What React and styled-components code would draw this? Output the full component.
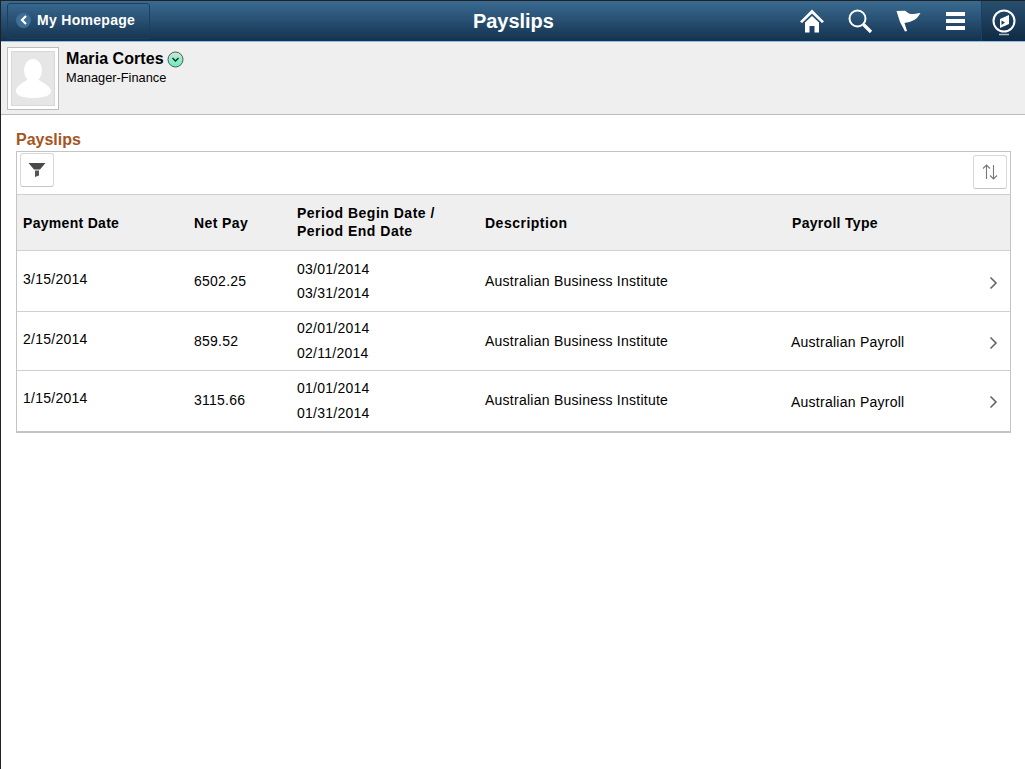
import styled, { createGlobalStyle } from 'styled-components';

const GlobalStyle = createGlobalStyle`
  html, body {
    margin: 0;
    padding: 0;
    background: #fff;
  }
  body {
    font-family: "Liberation Sans", Arial, sans-serif;
    font-size: 14px;
    color: #000;
  }
`;

const Page = styled.div`
  box-sizing: border-box;
  height: 769px;
  border-left: 1px solid #222;
  border-top: 1px solid #222;
  overflow: hidden;
`;

const Banner = styled.header`
  height: 40px;
  border-bottom: 1px solid #8fbce6;
  background: linear-gradient(#3a6b92, #14324f);
  display: flex;
  align-items: center;
  position: relative;
`;

const BackButton = styled.a`
  box-sizing: border-box;
  margin-left: 6px;
  width: 143px;
  height: 36px;
  border: 1px solid #1d3f5e;
  border-radius: 3px;
  display: flex;
  align-items: center;
  gap: 6px;
  padding: 0 0 2px 8px;
  color: #fff;
  font-size: 14px;
  font-weight: bold;
  letter-spacing: 0.3px;
`;

const BackDot = styled.span`
  width: 15px;
  height: 15px;
  border-radius: 50%;
  background: #3f6f97;
  display: flex;
  align-items: center;
  justify-content: center;
`;

const BannerTitle = styled.h1`
  position: absolute;
  left: 472px;
  top: 9px;
  margin: 0;
  color: #fff;
  font-size: 20px;
  line-height: 23px;
  font-weight: bold;
  letter-spacing: -0.05px;
`;

const BannerIcons = styled.nav`
  margin-left: auto;
  display: flex;
  align-items: center;
  height: 100%;
`;

const IconSlot = styled.span`
  width: ${(p) => p.$w}px;
  display: flex;
  justify-content: center;
`;

const CompassSlot = styled.span`
  box-sizing: border-box;
  width: 44px;
  height: 100%;
  margin-left: 2px;
  padding-top: 3px;
  background: rgba(10, 30, 50, 0.35);
  border-left: 1px solid #1d3f5e;
  display: flex;
  align-items: center;
  justify-content: center;
`;

const ProfileBand = styled.section`
  height: 67px;
  background: #efefef;
  border-bottom: 1px solid #bbb;
  display: flex;
  padding: 5px 0 0 6px;
`;

const Photo = styled.div`
  box-sizing: border-box;
  width: 52px;
  height: 63px;
  border: 1px solid #bdbdbd;
  background: #fff;
  padding: 3px;
`;

const PhotoInner = styled.div`
  height: 100%;
  background: #e6e6e6;
  border: 1px solid #d8d8d8;
  box-sizing: border-box;
`;

const ProfileText = styled.div`
  margin-left: 7px;
`;

const NameRow = styled.div`
  display: flex;
  align-items: center;
  gap: 3px;
  font-size: 16px;
  line-height: 20px;
  font-weight: bold;
  letter-spacing: 0.06px;
  margin-top: 2px;
`;

const JobTitle = styled.div`
  font-size: 12.8px;
  line-height: 14px;
  margin-top: 2px;
`;

const Content = styled.main`
  padding: 16px 14px 0 15px;
`;

const SectionTitle = styled.h2`
  margin: 0 0 2px;
  color: #a5551d;
  font-size: 16px;
  line-height: 18px;
  font-weight: bold;
`;

const GridBox = styled.div`
  border: 1px solid #c4c4c4;
  border-bottom-width: 2px;
`;

const Toolbar = styled.div`
  height: 41px;
  border-bottom: 1px solid #d0d0d0;
  display: flex;
  justify-content: space-between;
  align-items: flex-start;
  padding: 1px 3px 0;
`;

const ToolButton = styled.button`
  box-sizing: border-box;
  width: 34px;
  height: 34px;
  margin-top: ${(p) => p.$drop || 0}px;
  padding: 0 1px 0 0;
  background: #fff;
  border: 1px solid #d8d8d8;
  border-bottom-color: #c4c4c4;
  border-radius: 3px;
  display: flex;
  align-items: center;
  justify-content: center;
`;

const Columns = styled.div`
  display: grid;
  grid-template-columns: 171px 103px 188px 306px 1fr 30px;
`;

const HeaderRow = styled(Columns)`
  height: 55px;
  background: #efefef;
  border-bottom: 1px solid #d0d0d0;
  align-items: center;
  font-weight: bold;
  font-size: 14px;
  line-height: 18px;
`;

const HeaderCell = styled.div`
  padding-left: ${(p) => p.$left || 6}px;
  margin-top: ${(p) => p.$lift || 0}px;
  letter-spacing: ${(p) => p.$track}px;
`;

const Row = styled(Columns)`
  height: ${(p) => p.$h}px;
  border-bottom: 1px solid #d0d0d0;
  letter-spacing: 0.25px;
  &:last-child {
    border-bottom: 0;
  }
`;

const Cell = styled.div`
  padding-left: 6px;
  padding-top: ${(p) => p.$top}px;
  line-height: 16px;
`;

const Dates = styled(Cell)`
  line-height: 24.5px;
`;

const Chevron = styled.div`
  padding-top: ${(p) => p.$top}px;
  padding-left: 9px;
`;

const rows = [
  { h: 60, paid: '3/15/2014', net: '6502.25', begin: '03/01/2014', end: '03/31/2014', type: '', off: [20, 22, 5.75, 22, 24, 25] },
  { h: 58, paid: '2/15/2014', net: '859.52', begin: '02/01/2014', end: '02/11/2014', type: 'Australian Payroll', off: [19, 21, 4, 21, 22, 24] },
  { h: 60, paid: '1/15/2014', net: '3115.66', begin: '01/01/2014', end: '01/31/2014', type: 'Australian Payroll', off: [19, 21, 5, 21, 23, 24] },
];

function HomeIcon() {
  return (
    <svg width="24" height="24" viewBox="0 0 24 24" fill="#fff">
      <path d="M12 0.5 L24 12.5 L22 14 L12 4.5 L2 14 L0 12.5 Z" />
      <path d="M5 13.5 L12 7 L19 13.5 V23.5 H14.5 V17 H9.5 V23.5 H5 Z" />
    </svg>
  );
}

function SearchIcon() {
  return (
    <svg width="26" height="26" viewBox="0 0 26 26" fill="none" stroke="#fff">
      <circle cx="10.5" cy="10.5" r="8" strokeWidth="2" />
      <path d="M16.5 16.5 L24 24" strokeWidth="3.2" />
    </svg>
  );
}

function FlagIcon() {
  return (
    <svg width="26" height="26" viewBox="0 0 26 26" fill="#fff">
      <path d="M0.5 3 L9 2.7 C11 4 13 6 15.5 6 C18 6 21 5.5 24.5 5 C22 9 20 11.5 17 12.5 C14 14 11 14.5 8.5 15 L11 23 L9 23.5 L4 14 Z" />
    </svg>
  );
}

function MenuIcon() {
  return (
    <svg width="19" height="18" viewBox="0 0 19 18" fill="#fff">
      <rect x="0" y="0" width="19" height="4" />
      <rect x="0" y="7" width="19" height="4" />
      <rect x="0" y="14" width="19" height="4" />
    </svg>
  );
}

function CompassIcon() {
  return (
    <svg width="26" height="28" viewBox="0 0 26 28" fill="none">
      <circle cx="13" cy="12" r="10.5" stroke="#fff" strokeWidth="2" />
      <path d="M18 6 V15 L9 19 V10 Z" fill="#fff" />
      <path d="M10.5 11.5 L14 13.5 L10.5 16 Z" fill="#1d3f5e" />
      <path d="M8 25.5 H18" stroke="#a9bccb" strokeWidth="1.5" />
    </svg>
  );
}

function ChevronIcon() {
  return (
    <svg width="9" height="14" viewBox="0 0 9 14" fill="none" stroke="#666" strokeWidth="1.6">
      <path d="M1.5 1.5 L7 7 L1.5 12.5" />
    </svg>
  );
}

export default function App() {
  return (
    <>
      <GlobalStyle />
      <Page>
        <Banner>
          <BackButton>
            <BackDot>
              <svg width="8" height="10" viewBox="0 0 8 10" fill="none" stroke="#fff" strokeWidth="2.2">
                <path d="M6 1 L2 5 L6 9" />
              </svg>
            </BackDot>
            My Homepage
          </BackButton>
          <BannerTitle>Payslips</BannerTitle>
          <BannerIcons>
            <IconSlot $w={47}><HomeIcon /></IconSlot>
            <IconSlot $w={50}><SearchIcon /></IconSlot>
            <IconSlot $w={47}><FlagIcon /></IconSlot>
            <IconSlot $w={47}><MenuIcon /></IconSlot>
            <CompassSlot><CompassIcon /></CompassSlot>
          </BannerIcons>
        </Banner>
        <ProfileBand>
          <Photo>
            <PhotoInner>
              <svg width="42" height="53" viewBox="0 0 42 53" fill="#fff">
                <ellipse cx="21" cy="18.5" rx="9" ry="11.5" />
                <path d="M15 28 C8 32 4 35 4 39 C4 44 12 46 21 46 C30 46 39 44 39 39 C39 35 33 32 27 28 Z" />
              </svg>
            </PhotoInner>
          </Photo>
          <ProfileText>
            <NameRow>
              Maria Cortes
              <svg width="17" height="17" viewBox="0 0 17 17">
                <defs>
                  <linearGradient id="dropFill" x1="0" y1="0" x2="0" y2="1">
                    <stop offset="0" stopColor="#c9e8da" />
                    <stop offset="1" stopColor="#5ff0bc" />
                  </linearGradient>
                </defs>
                <circle cx="8.5" cy="8.5" r="7.5" fill="url(#dropFill)" stroke="#555" />
                <path d="M5.5 7 L8.5 10 L11.5 7" fill="none" stroke="#222" strokeWidth="1.4" />
              </svg>
            </NameRow>
            <JobTitle>Manager-Finance</JobTitle>
          </ProfileText>
        </ProfileBand>
        <Content>
          <SectionTitle>Payslips</SectionTitle>
          <GridBox>
            <Toolbar>
              <ToolButton aria-label="Filter">
                <svg width="18" height="16" viewBox="0 0 18 16" fill="#4a4a4a">
                  <path d="M0.5 1 H17.5 L12 7.5 H6 Z" />
                  <path d="M7 8.5 H11 V13.5 L7 15 Z" fill="#555" />
                </svg>
              </ToolButton>
              <ToolButton aria-label="Sort" $drop={2}>
                <svg width="18" height="18" viewBox="0 0 18 18" fill="none" stroke="#777" strokeWidth="1.1">
                  <path d="M5.5 16 V2 M2 5.5 L5.5 2 L9 5.5" />
                  <path d="M12.5 2 V16 M9 12.5 L12.5 16 L16 12.5" />
                </svg>
              </ToolButton>
            </Toolbar>
            <HeaderRow>
              <HeaderCell $track={0.3}>Payment Date</HeaderCell>
              <HeaderCell $track={0.4}>Net Pay</HeaderCell>
              <HeaderCell $track={0.5} $lift={-1}>Period Begin Date /<br />Period End Date</HeaderCell>
              <HeaderCell $track={0.5}>Description</HeaderCell>
              <HeaderCell $track={0.3} $left={7}>Payroll Type</HeaderCell>
              <div />
            </HeaderRow>
            {rows.map((r) => (
              <Row key={r.paid} $h={r.h}>
                <Cell $top={r.off[0]}>{r.paid}</Cell>
                <Cell $top={r.off[1]}>{r.net}</Cell>
                <Dates $top={r.off[2]}>{r.begin}<br />{r.end}</Dates>
                <Cell $top={r.off[3]}>Australian Business Institute</Cell>
                <Cell $top={r.off[4]}>{r.type}</Cell>
                <Chevron $top={r.off[5]}><ChevronIcon /></Chevron>
              </Row>
            ))}
          </GridBox>
        </Content>
      </Page>
    </>
  );
}
